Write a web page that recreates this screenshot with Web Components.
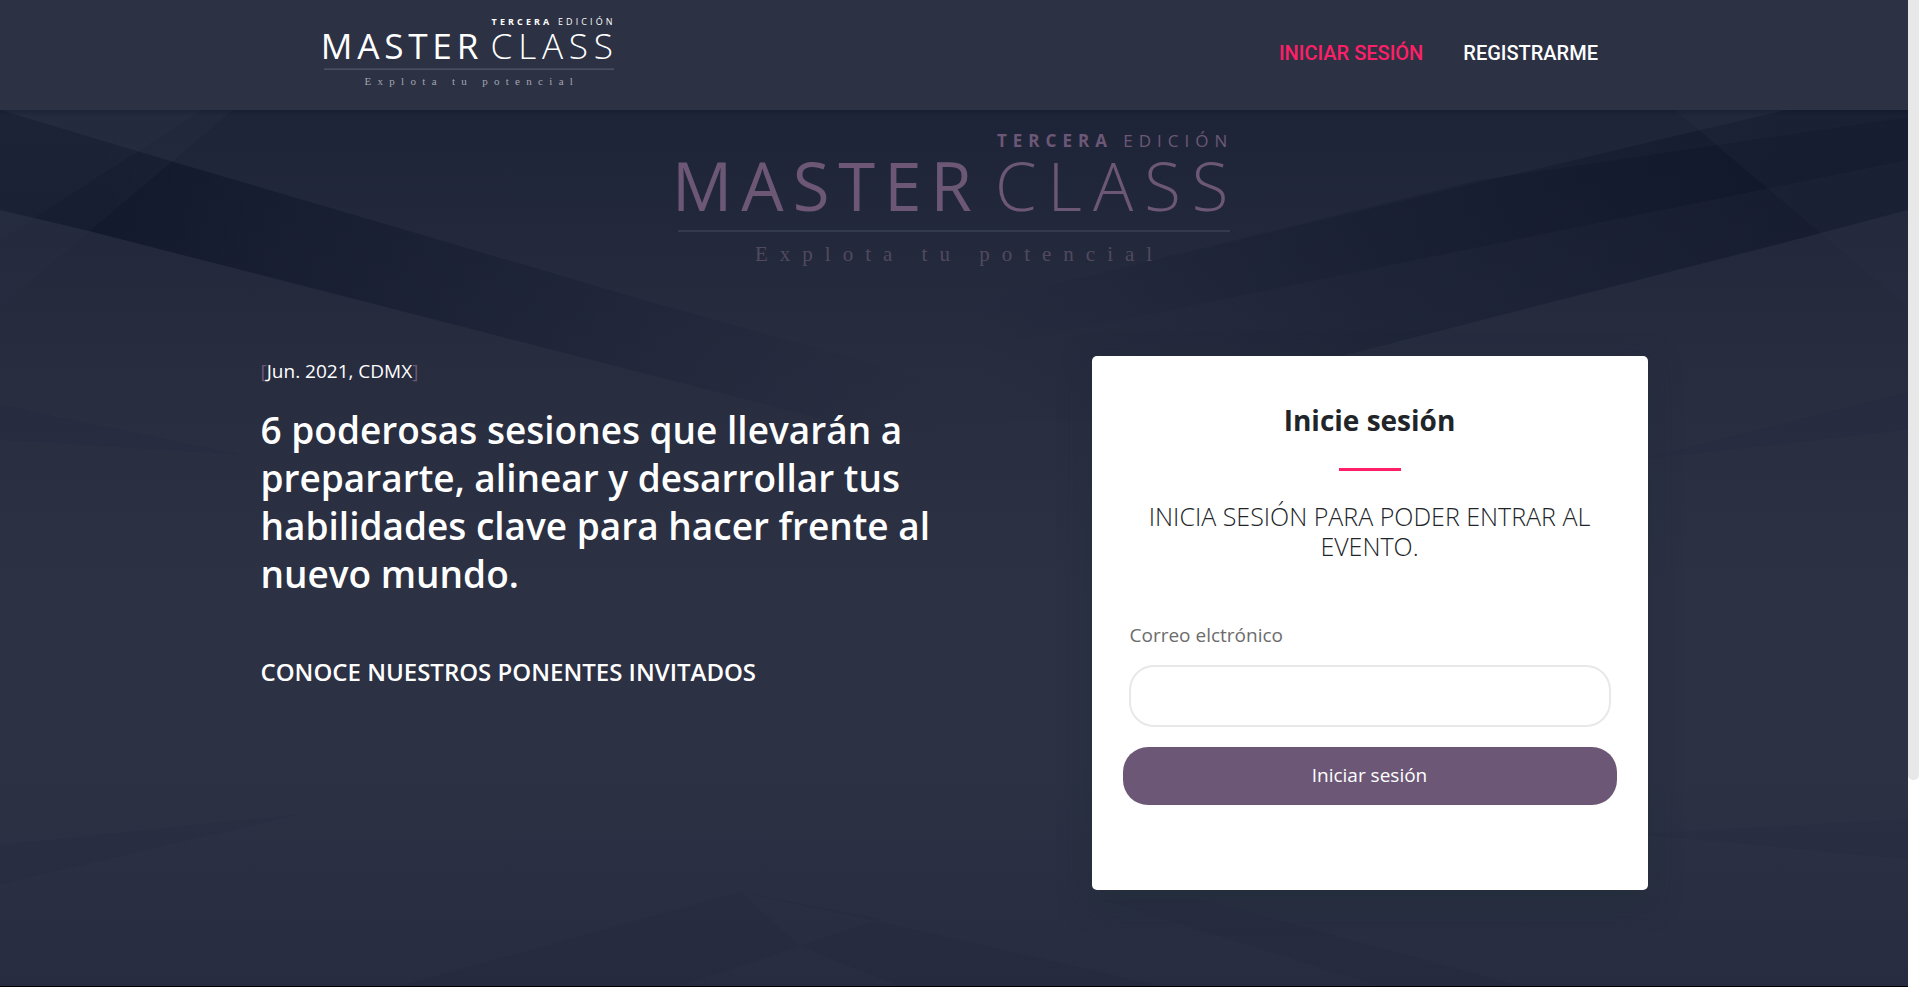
<!DOCTYPE html>
<html lang="es">
<head>
<meta charset="utf-8">
<meta name="viewport" content="width=device-width, initial-scale=1">
<title>Masterclass</title>
<style>
  html, body { margin: 0; height: 100%; }
  body { background: #2c3144; font-family: "Open Sans", sans-serif; color: #fff; }
</style>
</head>
<body>
<mc-page>
  <mc-header slot="header"></mc-header>
  <mc-hero>
    <mc-intro slot="intro">
      <span slot="date">Jun. 2021, CDMX</span>
      <span slot="title">6 poderosas sesiones que llevarán a prepararte, alinear y desarrollar tus habilidades clave para hacer frente al nuevo mundo.</span>
      <span slot="link">CONOCE NUESTROS PONENTES INVITADOS</span>
    </mc-intro>
    <mc-login slot="login">
      <span slot="title">Inicie sesión</span>
      <span slot="lead">INICIA SESIÓN PARA PODER ENTRAR AL EVENTO.</span>
    </mc-login>
  </mc-hero>
</mc-page>
<script>
  const define = (name, html) => {
    const template = document.createElement('template');
    template.innerHTML = html;
    customElements.define(name, class extends HTMLElement {
      constructor() {
        super();
        this.attachShadow({ mode: 'open' }).append(template.content.cloneNode(true));
      }
    });
  };

  define('mc-logo', `
    <style>
      :host { display: block; color: #fff; }
      svg { display: block; width: 100%; height: auto; overflow: visible; }
      text { fill: currentColor; }
      .edition { font: 700 17px "Open Sans", sans-serif; letter-spacing: 6px; }
      .light { font-weight: 400; }
      .master { font: 400 67px "Open Sans", sans-serif; letter-spacing: 9px; }
      .class { font: 300 67px "Open Sans", sans-serif; letter-spacing: 11px; }
      .tag { font: 400 21px "Liberation Serif", serif; letter-spacing: 12px; fill: var(--logo-tag, #a3a6b1); }
      rect { fill: var(--logo-line, #5d6172); }
    </style>
    <svg viewBox="0 0 552 140" role="img" aria-label="Masterclass">
      <text class="edition" x="319" y="19">TERCERA <tspan class="light">EDICIÓN</tspan></text>
      <text class="master" x="-6" y="83">MASTER</text>
      <text class="class" x="317" y="83">CLASS</text>
      <rect x="0" y="102" width="552" height="2"/>
      <text class="tag" x="77" y="133">Explota tu potencial</text>
    </svg>`);

  define('mc-header', `
    <style>
      :host { display: block; background: #2c3144; }
      header { max-width: 1288px; margin: 0 auto; padding-left: 14px; height: 110px; display: flex; justify-content: space-between; box-sizing: border-box; }
      .brand { width: 290px; padding-top: 15px; flex: none; }
      nav { display: flex; gap: 40px; align-items: center; height: 106px; }
      a { color: #fff; text-decoration: none; font: 500 20px/36px Roboto, sans-serif; }
      a.active { color: #ff1f67; }
    </style>
    <header>
      <a class="brand" href="#inicio"><mc-logo></mc-logo></a>
      <nav><a class="active" href="#iniciar">INICIAR SESIÓN</a><a href="#registro">REGISTRARME</a></nav>
    </header>`);

  define('mc-backdrop', `
    <style>
      :host { display: block; }
      svg { display: block; width: 100%; height: 100%; }
    </style>
    <svg viewBox="0 110 1908 877" preserveAspectRatio="none" aria-hidden="true">
      <defs>
        <linearGradient id="base" x1="0" y1="0" x2="0" y2="1">
          <stop offset="0" stop-color="#1e2437"/><stop offset=".28" stop-color="#272c3f"/>
          <stop offset=".55" stop-color="#2c3144"/><stop offset=".75" stop-color="#2c3144"/>
          <stop offset="1" stop-color="#272c40"/>
        </linearGradient>
        <linearGradient id="left" gradientUnits="userSpaceOnUse" x1="100" y1="0" x2="950" y2="0">
          <stop offset="0" stop-color="#10162a" stop-opacity=".8"/><stop offset=".5" stop-color="#161c30" stop-opacity=".45"/><stop offset="1" stop-color="#1e2438" stop-opacity="0"/>
        </linearGradient>
        <linearGradient id="right" gradientUnits="userSpaceOnUse" x1="1800" y1="0" x2="960" y2="0">
          <stop offset="0" stop-color="#0e1428" stop-opacity=".55"/><stop offset=".5" stop-color="#141a2e" stop-opacity=".35"/><stop offset="1" stop-color="#1e2438" stop-opacity="0"/>
        </linearGradient>
        <linearGradient id="glow" x1="0" y1="0" x2="0" y2="1">
          <stop offset="0" stop-color="#30364a" stop-opacity=".2"/><stop offset="1" stop-color="#30364a" stop-opacity=".1"/>
        </linearGradient>
        <linearGradient id="edge" x1="0" y1="0" x2="0" y2="1">
          <stop offset="0" stop-color="#0a1024" stop-opacity=".3"/><stop offset="1" stop-color="#0a1024" stop-opacity="0"/>
        </linearGradient>
      </defs>
      <rect y="110" width="1908" height="877" fill="url(#base)"/>
      <path d="M0 110L174 162L643 300L943 383L1100 430L860 430L735 397L447 323L92 232L0 210Z" fill="url(#left)"/>
      <path d="M0 110H202L0 240Z" fill="url(#glow)"/>
      <path d="M0 110H233L0 307Z" fill="url(#glow)"/>
      <path d="M960 307L1700 130L1786 110H1908V160L1761 190L960 353Z" fill="url(#right)"/>
      <path d="M960 307L1480 180L1908 117V210L1822 233L1339 357L1100 420H760Z" fill="url(#right)"/>
      <path d="M1675 110L1908 307V110Z" fill="url(#glow)"/>
      <path d="M0 405L240 455L0 440Z M1908 392L1640 460L1908 430Z" fill="#1e2438" fill-opacity=".12"/>
      <path d="M0 846L300 815L0 885Z M1908 820L1640 835L1908 860Z" fill="#1e2438" fill-opacity=".12"/>
      <path d="M400 987L740 893L880 920L680 987Z M740 893L800 947L900 987H1160L890 925Z M1200 900L1520 987H1380L1100 900Z" fill="#1e2438" fill-opacity=".12"/>
      <rect y="110" width="1908" height="6" fill="url(#edge)"/>
    </svg>`);

  define('mc-hero', `
    <style>
      :host { display: grid; border-bottom: 1px solid #000; }
      mc-backdrop, main { grid-area: 1 / 1; min-width: 0; min-height: 0; }
      mc-backdrop { contain: size; }
      main { position: relative; width: 100%; max-width: 1387px; box-sizing: border-box; margin: 0 auto; padding: 18px 0 40px; }
      mc-logo { width: 552px; max-width: 100%; margin: 0 auto; color: #6c5876; --logo-line: #343a4d; --logo-tag: #51495f; }
      .cols { display: grid; grid-template-columns: minmax(0, 700px) minmax(0, 556px); justify-content: space-between; align-items: start; margin-top: 88px; }
    </style>
    <mc-backdrop></mc-backdrop>
    <main>
      <mc-logo></mc-logo>
      <div class="cols"><slot name="intro"></slot><slot name="login"></slot></div>
    </main>`);

  define('mc-intro', `
    <style>
      :host { display: block; }
      p, h1, h2 { margin: 0; }
      p { font-size: 19px; line-height: 30px; font-weight: 500; }
      b { color: #6c5876; font-weight: 500; }
      h1 { font-size: 37px; line-height: 48px; font-weight: 600; margin-top: 20px; }
      h2 { font-size: 24px; line-height: 32px; font-weight: 600; margin-top: 58px; }
    </style>
    <p><b>[</b><slot name="date"></slot><b>]</b></p>
    <h1><slot name="title"></slot></h1>
    <h2><slot name="link"></slot></h2>`);

  define('mc-login', `
    <style>
      :host { display: block; background: #fff; color: #212529; border-radius: 5px; box-shadow: 0 10px 30px rgba(29, 45, 53, .5); }
      form { display: flex; flex-direction: column; padding: 44px 31px 85px; }
      h2 { margin: 0; font-size: 28px; line-height: 40px; font-weight: 700; text-align: center; }
      hr { width: 62px; height: 3px; border: 0; margin: 28px auto 30px; background: #ff1f67; }
      p { margin: 0 7px; font-size: 25px; line-height: 30px; font-weight: 300; text-align: center; }
      label { margin: 58px 7px 0; font-size: 19px; line-height: 32px; color: #6c6c6c; }
      input { margin: 14px 6px 20px; height: 62px; box-sizing: border-box; border: 2px solid #e8e8e8; border-radius: 25px; padding: 0 20px; font: 19px "Open Sans", sans-serif; background: #fff; }
      button { height: 58px; border: 0; border-radius: 25px; background: #6c5876; color: #fff; font: 400 19px "Open Sans", sans-serif; padding: 0 0 2px; }
    </style>
    <form>
      <h2><slot name="title"></slot></h2>
      <hr>
      <p><slot name="lead"></slot></p>
      <label for="email">Correo elctrónico</label>
      <input id="email" type="email" name="email">
      <button type="button">Iniciar sesión</button>
    </form>`);

  define('mc-scrollbar', `
    <style>
      :host { display: block; background: #fff; }
      div { height: 79%; background: #e8e8e8; border-radius: 0 0 5px 5px; }
    </style>
    <div></div>`);

  define('mc-page', `
    <style>
      :host { display: grid; grid-template-columns: minmax(0, 1fr) 11px; min-height: 100vh; }
      .page { display: grid; grid-template-rows: auto 1fr; }
    </style>
    <div class="page"><slot name="header"></slot><slot></slot></div>
    <mc-scrollbar></mc-scrollbar>`);
</script>
</body>
</html>
